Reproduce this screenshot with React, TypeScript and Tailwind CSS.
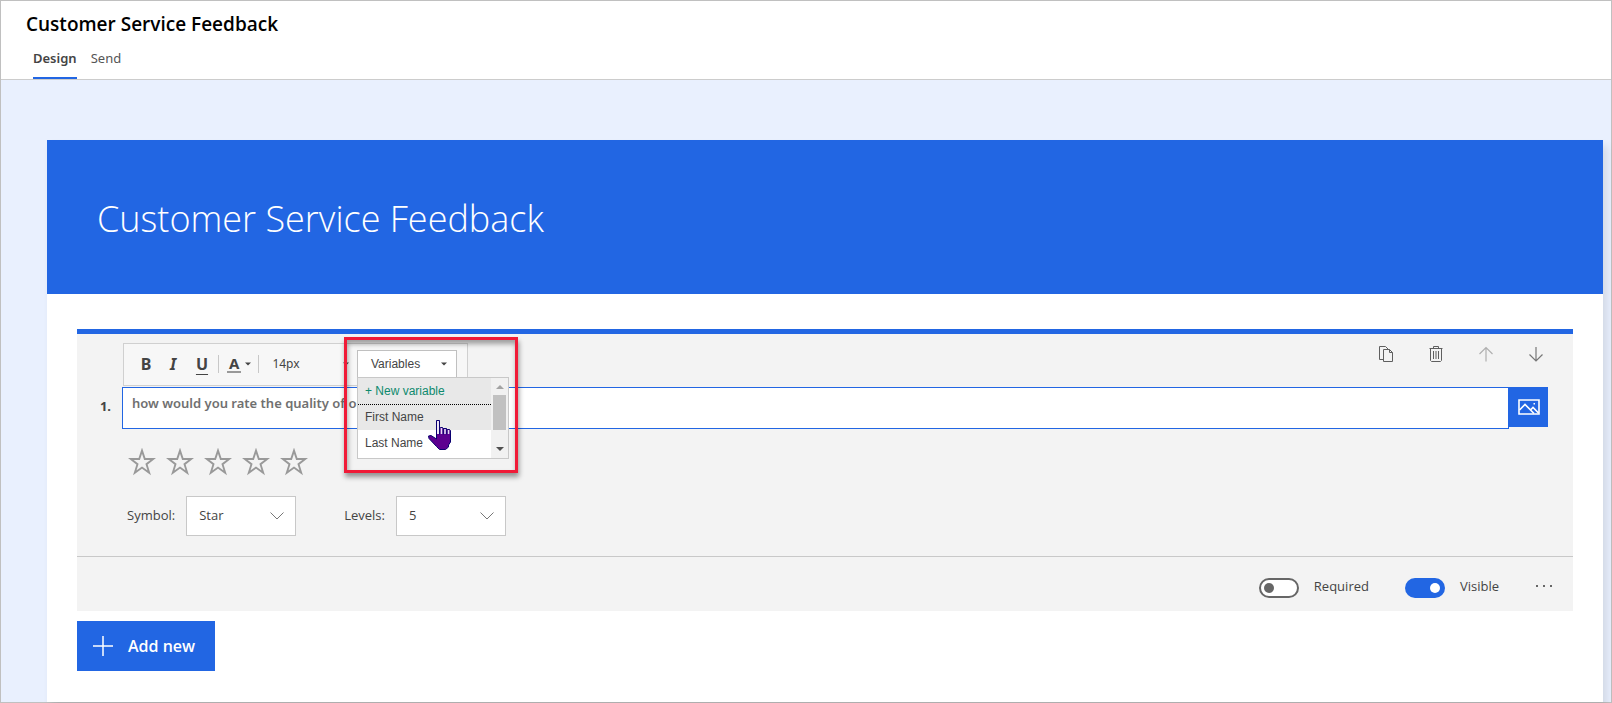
import React, { useState } from "react";

const bodyFont = "font-['Open_Sans','Noto_Sans',sans-serif]";
const notoFont = "font-['Noto_Sans','Open_Sans',sans-serif]";
const widgetFont = "font-['Liberation_Sans',Arial,sans-serif]";

function Caret({ className = "" }: { className?: string }) {
  return (
    <svg viewBox="0 0 6 4" className={`h-1 w-1.5 ${className}`} fill="currentColor" aria-hidden="true">
      <path d="M0 0.500h6L3 3.500z" />
    </svg>
  );
}

function ScrollArrow({ className = "" }: { className?: string }) {
  return (
    <svg viewBox="0 0 8 4" className={`h-1 w-2 ${className}`} fill="currentColor" aria-hidden="true">
      <path d="M0 0h8L4 4z" />
    </svg>
  );
}

function StarIcon() {
  return (
    <svg viewBox="0 0 28 28" className="size-7" fill="none" stroke="#999" strokeWidth="1.900" aria-hidden="true">
      <path d="M14 2.600 L16.800 11 H25.200 L18.500 16.200 L21.200 24.800 L14 19.600 L6.800 24.800 L9.500 16.200 L2.800 11 H11.200 Z" />
    </svg>
  );
}

function CopyIcon() {
  return (
    <svg viewBox="0 0 16 18" className="h-[18px] w-4" fill="none" stroke="#5f5f5f" aria-hidden="true">
      <path d="M5 14.500H1.500V1.500H7.500L10.500 4.500" />
      <path d="M5.500 4.500H11.500L14.500 7.500V16.500H5.500Z" />
      <path d="M11.500 4.500V7.500H14.500" />
    </svg>
  );
}

function TrashIcon() {
  return (
    <svg viewBox="0 0 16 18" className="h-[18px] w-4" fill="none" stroke="#5f5f5f" aria-hidden="true">
      <path d="M1.500 3.500H14.500M5.500 3.500V1.500H10.500V3.500M2.500 3.500V15.500L3.500 16.500H12.500L13.500 15.500V3.500M5.500 6V14M8 6V14M10.500 6V14" />
    </svg>
  );
}

function ArrowIcon({ down = false }: { down?: boolean }) {
  return down ? (
    <svg viewBox="0 0 16 18" className="h-[18px] w-4" fill="none" stroke="#777" strokeWidth="1.200" aria-hidden="true">
      <path d="M8 2V16M1.500 9.500L8 16L14.500 9.500" />
    </svg>
  ) : (
    <svg viewBox="0 0 16 18" className="h-[18px] w-4" fill="none" stroke="#b0b0b0" strokeWidth="1.200" aria-hidden="true">
      <path d="M8 16.500V2.500M1.500 9L8 2.500L14.500 9" />
    </svg>
  );
}

function PictureIcon() {
  return (
    <svg viewBox="0 0 22 16" className="h-4 w-[22px]" fill="none" stroke="#fff" strokeWidth="1.600" aria-hidden="true">
      <path d="M1 1H21V15H1Z" />
      <path d="M1.500 11L7 5.500L16 14.500M12.500 11L15 8.500L20.500 14" />
      <path d="M15.500 4.800H17" />
    </svg>
  );
}

function Dropdown({ id, label, options }: { id: string; label: string; options: string[] }) {
  return (
    <div className="flex items-center gap-[11px]">
      <label htmlFor={id}>{label}</label>
      <div className="relative">
        <select id={id} className="h-10 w-[110px] appearance-none rounded-none border border-[#c8c8c8] bg-white px-3 text-[13px] text-[#444]">
          {options.map((o) => (
            <option key={o}>{o}</option>
          ))}
        </select>
        <svg viewBox="0 0 14 8" className="pointer-events-none absolute top-4 right-3 h-2 w-[14px]" fill="none" stroke="#777" aria-hidden="true">
          <path d="M0.500 0.500L7 7L13.500 0.500" />
        </svg>
      </div>
    </div>
  );
}

function Toggle({ label, initial }: { label: string; initial: boolean }) {
  const [on, setOn] = useState(initial);
  return (
    <label className="flex items-center gap-[15px]">
      <input type="checkbox" role="switch" className="peer sr-only" checked={on} onChange={() => setOn(!on)} />
      <span
        className={
          on
            ? "flex h-5 w-10 items-center justify-end rounded-full bg-[#2266e3] px-[5px]"
            : "flex h-5 w-10 items-center rounded-full border-2 border-[#666] bg-white px-[3px]"
        }
      >
        <span className={on ? "size-[10px] rounded-full bg-white" : "size-[10px] rounded-full bg-[#666]"} />
      </span>
      <span className="pb-[3px]">{label}</span>
    </label>
  );
}

function HandCursor() {
  return (
    <svg viewBox="0 0 24 32" className="pointer-events-none absolute top-[41px] left-[70px] h-8 w-6" aria-hidden="true">
      <path
        d="M8.500 1.500H11.500V9.500L12.500 8.500H14.500L15.500 9.500H18.500L19.500 10.500H21.500L22.500 11.500V23L20.500 26V28L17.500 30.500H11.500L8.500 27.500L1 19.500L0.500 17L3 16.500L8.500 20Z"
        fill="#5d0090"
        stroke="#0a0070"
      />
      <path d="M10 2V15" stroke="#fff" strokeWidth="1.800" />
      <path d="M13.500 9V15M17 10V15M20.500 11V15" stroke="#e4dcf4" strokeWidth="1.600" />
      <path d="M11.500 9V15.500M15.300 9V15.500M18.800 10V15.500" stroke="#0a0070" />
    </svg>
  );
}

function VariablesMenu() {
  return (
    <div className={`absolute -top-[7px] left-[220px] z-10 h-[136px] w-[174px] border-3 border-[#f01a37] p-[10px] text-[12px] text-[#444] shadow-[1px_4px_5px_rgba(0,0,0,0.4),inset_1px_4px_5px_rgba(0,0,0,0.35)] ${widgetFont}`}>
      <button type="button" className="flex h-[27px] w-[100px] items-center justify-between border border-b-0 border-[#c0c0c0] bg-white pr-[9px] pl-[13px]">
        Variables
        <Caret />
      </button>
      <div className="relative flex h-[82px] w-[152px] border border-[#c8c8c8] bg-white">
        <ul className="flex-1">
          <li>
            <button type="button" className="block h-[27px] w-full border-b border-dotted border-black bg-[#e8e8e8] pl-[7px] text-left text-[#0e8a6e]">
              + New variable
            </button>
          </li>
          <li>
            <button type="button" className="block h-[25px] w-full bg-[#e8e8e8] pb-[2px] pl-[7px] text-left">First Name</button>
          </li>
          <li>
            <button type="button" className="block h-[26px] w-full pl-[7px] text-left">Last Name</button>
          </li>
        </ul>
        <div className="flex w-[17px] flex-col items-center bg-[#f1f1f1] pt-[7px] pb-[7px]">
          <ScrollArrow className="rotate-180 text-[#a3a3a3]" />
          <span className="mt-[6px] mb-auto h-[35px] w-[13px] bg-[#c1c1c1]" />
          <ScrollArrow className="text-[#505050]" />
        </div>
        <HandCursor />
      </div>
    </div>
  );
}

function FormatToolbar() {
  return (
    <div className={`relative ml-px flex h-[43px] w-[345px] items-center border border-[#d0d0d0] bg-[#f7f7f7] pb-px text-[16px] text-[#444] ${notoFont}`}>
      <button type="button" className="ml-[9px] w-[26px] font-bold">B</button>
      <button type="button" className="w-[28px] font-bold italic">I</button>
      <button type="button" className="w-[30px] font-bold underline underline-offset-4">U</button>
      <span className="mx-px h-[18px] w-px bg-[#c8c8c8]" />
      <button type="button" aria-label="Text colour" className="flex items-center gap-1 px-[7px] text-[15px]">
        <span className="border-b-2 border-[#999] px-[2px] leading-[16px] font-bold">A</span>
        <Caret />
      </button>
      <span className="h-[18px] w-px bg-[#c8c8c8]" />
      <button type="button" className="flex flex-1 items-center pl-[13px] text-[12px]">
        14px
        <Caret className="ml-[43px]" />
      </button>
      <VariablesMenu />
    </div>
  );
}

export default function App() {
  return (
    <div className={`flex min-h-screen flex-col border border-[#c0c0c0] bg-[#e9f0fe] text-[14px] text-[#444] ${bodyFont}`}>
      <header className="border-b border-[#ccc] bg-white">
        <h1 className="px-[25px] pt-[9px] text-[19px] leading-7 font-semibold text-black">Customer Service Feedback</h1>
        <nav className={`flex gap-[14px] px-8 pt-[9px] text-[13px] ${notoFont}`}>
          <a href="#design" className="h-8 border-b-2 border-[#2266e3] pt-[2px] font-semibold">Design</a>
          <a href="#send" className="pt-[2px] text-[#555]">Send</a>
        </nav>
      </header>

      <main className="mt-[60px] mr-2 ml-[46px] flex-1 bg-white shadow-[4px_6px_8px_rgba(0,0,0,0.1)]">
        <div className="flex h-[154px] items-center bg-[#2266e3] px-[50px] pt-1 text-white">
          <h2 className="text-4xl font-light">Customer Service Feedback</h2>
        </div>

        <div className="px-[30px] pt-[35px]">
          <section className="border-t-5 border-[#2266e3] bg-[#f3f3f3]">
            <div className="flex justify-between pt-[9px] pr-[29px] pl-[45px]">
              <FormatToolbar />
              <div className="flex gap-[34px] pt-px">
                <button type="button" aria-label="Copy" className="h-5"><CopyIcon /></button>
                <button type="button" aria-label="Delete" className="h-5"><TrashIcon /></button>
                <button type="button" aria-label="Move up" className="h-5"><ArrowIcon /></button>
                <button type="button" aria-label="Move down" className="h-5"><ArrowIcon down /></button>
              </div>
            </div>

            <div className={`mt-px flex pr-[25px] text-[13px] ${notoFont}`}>
              <label htmlFor="question" className="w-[45px] pt-[10px] pr-[11px] text-right font-bold">1.</label>
              <input
                id="question"
                type="text"
                defaultValue="how would you rate the quality of our"
                className="h-[42px] flex-1 border border-[#2266e3] bg-white px-[9px] pb-[10px] font-semibold text-[#707070]"
              />
              <button type="button" aria-label="Insert picture" className="flex h-10 w-[39px] items-center justify-center bg-[#2266e3]">
                <PictureIcon />
              </button>
            </div>

            <div className="mt-[19px] ml-[51px] flex gap-[10px]">
              {[1, 2, 3, 4, 5].map((n) => (
                <button type="button" key={n} aria-label={`${n} stars`}><StarIcon /></button>
              ))}
            </div>

            <div className="mt-5 ml-[50px] flex gap-12 pb-5 text-[13px]">
              <Dropdown id="symbol" label="Symbol:" options={["Star", "Number"]} />
              <Dropdown id="levels" label="Levels:" options={["5", "4", "3", "2"]} />
            </div>

            <div className="flex h-[55px] items-center justify-end border-t border-[#c8c8c8] pt-2 pr-5 text-[13px]">
              <div className="flex gap-9">
                <Toggle label="Required" initial={false} />
                <Toggle label="Visible" initial={true} />
              </div>
              <button type="button" aria-label="More options" className="ml-9 pb-1">
                <svg viewBox="0 0 18 4" className="h-1 w-[18px]" fill="#666" aria-hidden="true">
                  <path d="M1 1h2v2h-2zM8 1h2v2h-2zM15 1h2v2h-2z" />
                </svg>
              </button>
            </div>
          </section>

          <button type="button" className="mt-[10px] flex h-[50px] w-[138px] items-center gap-[14px] bg-[#2266e3] pl-[15px] text-[16px] font-semibold text-white">
            <svg viewBox="0 0 22 22" className="size-[22px]" stroke="#fff" strokeWidth="1.500" aria-hidden="true">
              <path d="M11 1V21M1 11H21" />
            </svg>
            Add new
          </button>
        </div>
      </main>
    </div>
  );
}
